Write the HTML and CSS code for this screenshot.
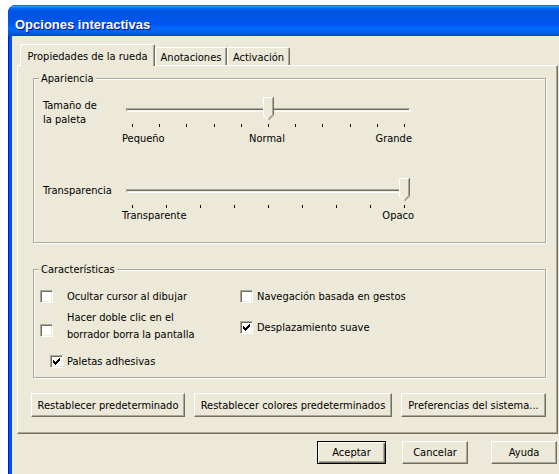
FILE: index.html
```html
<!DOCTYPE html>
<html lang="es">
<head>
<meta charset="utf-8">
<title>Opciones interactivas</title>
<link rel="stylesheet" href="styles.css">
</head>
<body>
<div class="window">
  <div class="titlebar"><span class="title">Opciones interactivas</span></div>
  <div class="client">
    <div class="tabs">
      <div class="tab tab-active tab-wheel">Propiedades de la rueda</div>
      <div class="tab tab-notes">Anotaciones</div>
      <div class="tab tab-activation">Activación</div>
    </div>

    <div class="panel">
      <div class="group group-look">
        <div class="group-title">Apariencia</div>

        <div class="slider-row row-size">
          <div class="slider-label">Tamaño de<br>la paleta</div>
          <div class="slider">
            <div class="rail">
              <div class="channel"></div>
              <svg class="thumb" style="--pos:0.5" width="11" height="24" viewBox="0 0 11 24">
                <polygon points="0.5,0.5 10.5,0.5 10.5,18 5.5,23 0.5,18" fill="#ECE9D8"/>
                <polyline points="0.5,18.5 0.5,0.5 10,0.5" fill="none" stroke="#fff"/>
                <polyline points="0.5,18 5.5,23" fill="none" stroke="#fff"/>
                <polyline points="10.5,0 10.5,18 5.5,23" fill="none" stroke="#716F64"/>
                <polyline points="9.5,1 9.5,17.6 5.5,21.6" fill="none" stroke="#ACA899"/>
              </svg>
            </div>
            <div class="ticks">
              <i></i><i></i><i></i><i></i><i></i><i></i><i></i><i></i><i></i><i></i><i></i>
            </div>
            <div class="marks marks-three">
              <span>Pequeño</span><span>Normal</span><span>Grande</span>
            </div>
          </div>
        </div>

        <div class="slider-row row-opacity">
          <div class="slider-label">Transparencia</div>
          <div class="slider">
            <div class="rail">
              <div class="channel"></div>
              <svg class="thumb" style="--pos:1" width="11" height="24" viewBox="0 0 11 24">
                <polygon points="0.5,0.5 10.5,0.5 10.5,18 5.5,23 0.5,18" fill="#ECE9D8"/>
                <polyline points="0.5,18.5 0.5,0.5 10,0.5" fill="none" stroke="#fff"/>
                <polyline points="0.5,18 5.5,23" fill="none" stroke="#fff"/>
                <polyline points="10.5,0 10.5,18 5.5,23" fill="none" stroke="#716F64"/>
                <polyline points="9.5,1 9.5,17.6 5.5,21.6" fill="none" stroke="#ACA899"/>
              </svg>
            </div>
            <div class="ticks">
              <i></i><i></i><i></i><i></i><i></i><i></i><i></i><i></i><i></i>
            </div>
            <div class="marks marks-two">
              <span>Transparente</span><span>Opaco</span>
            </div>
          </div>
        </div>
      </div>

      <div class="group group-features">
        <div class="group-title">Características</div>
        <div class="check-columns">
          <div class="check-col col-left">
            <label class="check check-wide">
              <span class="box"></span>
              <span class="check-text">Ocultar cursor al dibujar</span>
            </label>
            <label class="check check-wide check-multi">
              <span class="box"></span>
              <span class="check-text">Hacer doble clic en el<br>borrador borra la pantalla</span>
            </label>
            <label class="check check-tight check-last">
              <span class="box checked"><svg width="7" height="7" viewBox="0 0 7 7"><path d="M0 2h1v3h-1z M1 3h1v3h-1z M2 4h1v3h-1z M3 3h1v3h-1z M4 2h1v3h-1z M5 1h1v3h-1z M6 0h1v3h-1z" fill="#000"/></svg></span>
              <span class="check-text">Paletas adhesivas</span>
            </label>
          </div>
          <div class="check-col col-right">
            <label class="check check-tight">
              <span class="box"></span>
              <span class="check-text">Navegación basada en gestos</span>
            </label>
            <label class="check check-tight check-second">
              <span class="box checked"><svg width="7" height="7" viewBox="0 0 7 7"><path d="M0 2h1v3h-1z M1 3h1v3h-1z M2 4h1v3h-1z M3 3h1v3h-1z M4 2h1v3h-1z M5 1h1v3h-1z M6 0h1v3h-1z" fill="#000"/></svg></span>
              <span class="check-text">Desplazamiento suave</span>
            </label>
          </div>
        </div>
      </div>

      <div class="panel-buttons">
        <button class="btn btn-reset">Restablecer predeterminado</button>
        <button class="btn btn-colors">Restablecer colores predeterminados</button>
        <button class="btn btn-prefs">Preferencias del sistema...</button>
      </div>
    </div>

    <div class="dialog-buttons">
      <button class="btn btn-default btn-ok">Aceptar</button>
      <button class="btn btn-cancel">Cancelar</button>
      <button class="btn btn-help">Ayuda</button>
    </div>
  </div>
</div>
</body>
</html>
```

FILE: styles.css
```css
html, body {
  margin: 0;
  padding: 0;
  overflow: hidden;
  background: #fff;
}

body {
  width: 559px;
  height: 474px;
  font-family: "DejaVu Sans Condensed", "DejaVu Sans", sans-serif;
  font-stretch: condensed;
  font-size: 11px;
  color: #000;
}

/* ---- window frame ---- */
.window {
  margin: 5px 0 0 8px;
  width: 560px;
  height: 480px;
  background: #0054E3;
  border-top-left-radius: 8px;
  box-shadow: inset 1px 0 0 #0019CF;
  overflow: hidden;
}

.titlebar {
  height: 31px;
  box-sizing: border-box;
  padding: 13px 0 0 7px;
  border-top-left-radius: 8px;
  background: linear-gradient(to bottom,
    #0058EE 0%, #3593FF 4%, #288EFF 6%, #127DFF 8%, #036FFC 10%,
    #0262EE 14%, #0057E5 20%, #0054E3 24%, #0055EB 56%, #005BF5 66%,
    #026AFE 76%, #0062EF 86%, #0055DD 94%, #0048C8 100%);
}

.title {
  display: block;
  font-family: "Liberation Sans", Arial, sans-serif;
  font-weight: bold;
  font-size: 13px;
  line-height: 13px;
  color: #fff;
  text-shadow: 1px 1px 0 #0F1089;
}

.client {
  margin-left: 4px;
  height: 449px;
  background: #ECE9D8;
  padding: 8px 0 0 5px;
  box-sizing: border-box;
}

/* ---- tabs ---- */
.tabs {
  position: relative;
  z-index: 1;
  display: flex;
  align-items: flex-end;
  height: 21px;
  padding-left: 3px;
}

.tab {
  box-sizing: border-box;
  height: 18px;
  padding-top: 3px;
  line-height: 13px;
  text-align: center;
  background: #ECE9D8;
  border-top: 1px solid #fff;
  border-left: 1px solid #fff;
  border-right: 1px solid #716F64;
  box-shadow: inset -1px 0 0 #ACA899;
  border-radius: 2px 2px 0 0;
}

.tab-active {
  height: 22px;
  padding-top: 5px;
  margin-bottom: -1px;
}

.tab-wheel { width: 135px; }
.tab-notes { width: 72px; }
.tab-activation { width: 63px; }

/* ---- tab page ---- */
.panel {
  box-sizing: border-box;
  width: 541px;
  padding: 12px 11px 16px 15px;
  border: 1px solid;
  border-color: #fff #716F64 #716F64 #fff;
  box-shadow: inset -1px -1px 0 #ACA899;
}

.group {
  display: flex;
  flex-direction: column;
  border: 1px solid #ACA899;
  box-shadow: inset 1px 1px 0 #fff, 1px 1px 0 #fff;
}

.group-title {
  align-self: flex-start;
  margin: -7px 0 0 5px;
  padding: 0 2px;
  line-height: 13px;
  background: #ECE9D8;
}

.group-look {
  padding-bottom: 20px;
}

.group-features {
  margin-top: 26px;
  padding-bottom: 9px;
}

/* ---- sliders ---- */
.slider-row {
  display: flex;
  padding-left: 9px;
}

.row-size { margin-top: 12px; }
.row-opacity { margin-top: 33px; }

.slider-label {
  width: 78px;
  line-height: 14px;
}

.row-size .slider-label { padding-top: 2px; }
.row-opacity .slider-label { padding-top: 6px; line-height: 13px; }

.slider {
  width: 294px;
  display: flex;
  flex-direction: column;
}

.rail {
  position: relative;
  height: 25px;
}

.channel {
  box-sizing: border-box;
  height: 4px;
  margin: 11px 5px 0 5px;
  border-top: 1px solid #ACA899;
  border-left: 1px solid #ACA899;
  border-bottom: 1px solid #fff;
  border-right: 1px solid #fff;
  background: linear-gradient(#716F64 50%, #F1EFE2 50%);
}

.thumb {
  position: absolute;
  top: 0;
  left: calc(11px + var(--pos) * 272px - 5px);
  display: block;
}

.ticks {
  display: flex;
  justify-content: space-between;
  margin: 2px 10px 0 11px;
}

.ticks i {
  display: block;
  width: 1px;
  height: 3px;
  background: #000;
}

.marks {
  line-height: 13px;
  padding: 0 1px;
}

.marks-three {
  display: grid;
  grid-template-columns: 1fr auto 1fr;
  margin-top: 5px;
  padding-right: 3px;
}

.marks-three span:nth-child(2) { justify-self: center; }
.marks-three span:nth-child(3) { justify-self: end; }

.marks-two {
  display: flex;
  justify-content: space-between;
  margin-top: 1px;
}

/* ---- check boxes ---- */
.check-columns {
  display: flex;
  margin-top: 14px;
  padding-left: 6px;
}

.col-left { width: 200px; }

.check-col {
  display: flex;
  flex-direction: column;
}

.check {
  display: flex;
  align-items: center;
  line-height: 13px;
}

.box {
  box-sizing: border-box;
  flex: none;
  width: 13px;
  height: 13px;
  display: flex;
  align-items: center;
  justify-content: center;
  background: #fff;
  border: 1px solid;
  border-color: #ACA899 #fff #fff #ACA899;
  box-shadow: inset 1px 1px 0 #716F64, inset -1px -1px 0 #F1EFE2;
}

.box svg { display: block; }

.check-wide .box { margin-right: 14px; }
.check-tight .box { margin-right: 4px; }

.check-multi {
  margin-top: 6px;
  align-items: flex-start;
  line-height: 17px;
}

.check-multi .box { margin-top: 15px; }

.check-last {
  margin-top: 12px;
  margin-left: 10px;
}

.check-second { margin-top: 18px; }

/* ---- buttons ---- */
.btn {
  box-sizing: border-box;
  height: 24px;
  padding: 0;
  font: inherit;
  color: #000;
  background: #ECE9D8;
  border: 1px solid;
  border-color: #fff #716F64 #716F64 #fff;
  box-shadow: inset -1px -1px 0 #ACA899;
  border-radius: 0;
  text-align: center;
}

.panel-buttons {
  display: flex;
  gap: 9px;
  margin: 15px 0 0 -2px;
}

.btn-reset { width: 154px; }
.btn-colors { width: 198px; }
.btn-prefs { width: 145px; }

.dialog-buttons {
  display: flex;
  margin-top: 7px;
  padding-left: 300px;
}

.dialog-buttons .btn { height: 23px; }

.btn-default {
  border: 1px solid #000;
  box-shadow: inset 1px 1px 0 #fff, inset -1px -1px 0 #716F64, inset -2px -2px 0 #ACA899;
}

.btn-ok { width: 69px; }
.btn-cancel { width: 66px; margin-left: 16px; }
.btn-help { width: 66px; margin-left: 23px; }
```
